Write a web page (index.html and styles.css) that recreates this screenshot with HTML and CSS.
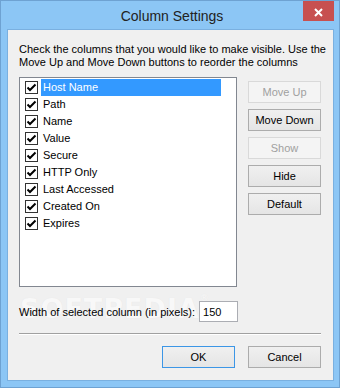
FILE: index.html
```
<!DOCTYPE html>
<html lang="en">
<head>
  <meta charset="UTF-8" />
  <title>Column Settings</title>
  <link rel="stylesheet" href="styles.css">
</head>
<body>

  <div class="window">
    <div class="titlebar">
      <span class="title">Column Settings</span>
      <span class="close">
        <svg width="9" height="9" viewBox="0 0 9 9"><path d="M1 1 L8 8 M8 1 L1 8" stroke="#fff" stroke-width="2" fill="none"/></svg>
      </span>
    </div>

    <div class="client">
      <div class="watermark">SOFTPEDIA<sup>®</sup></div>

      <p class="intro">Check the columns that you would like to make visible. Use the<br>Move Up and Move Down buttons to reorder the columns</p>

      <div class="main">
        <ul class="column-list">
          <li class="selected"><span class="check"><svg width="11" height="11" viewBox="0 0 11 11"><path d="M1.5 5.5 L4 8 L9.5 2.5" stroke="#000" stroke-width="2" fill="none"/></svg></span><span class="label">Host Name</span></li>
          <li><span class="check"><svg width="11" height="11" viewBox="0 0 11 11"><path d="M1.5 5.5 L4 8 L9.5 2.5" stroke="#000" stroke-width="2" fill="none"/></svg></span><span class="label">Path</span></li>
          <li><span class="check"><svg width="11" height="11" viewBox="0 0 11 11"><path d="M1.5 5.5 L4 8 L9.5 2.5" stroke="#000" stroke-width="2" fill="none"/></svg></span><span class="label">Name</span></li>
          <li><span class="check"><svg width="11" height="11" viewBox="0 0 11 11"><path d="M1.5 5.5 L4 8 L9.5 2.5" stroke="#000" stroke-width="2" fill="none"/></svg></span><span class="label">Value</span></li>
          <li><span class="check"><svg width="11" height="11" viewBox="0 0 11 11"><path d="M1.5 5.5 L4 8 L9.5 2.5" stroke="#000" stroke-width="2" fill="none"/></svg></span><span class="label">Secure</span></li>
          <li><span class="check"><svg width="11" height="11" viewBox="0 0 11 11"><path d="M1.5 5.5 L4 8 L9.5 2.5" stroke="#000" stroke-width="2" fill="none"/></svg></span><span class="label">HTTP Only</span></li>
          <li><span class="check"><svg width="11" height="11" viewBox="0 0 11 11"><path d="M1.5 5.5 L4 8 L9.5 2.5" stroke="#000" stroke-width="2" fill="none"/></svg></span><span class="label">Last Accessed</span></li>
          <li><span class="check"><svg width="11" height="11" viewBox="0 0 11 11"><path d="M1.5 5.5 L4 8 L9.5 2.5" stroke="#000" stroke-width="2" fill="none"/></svg></span><span class="label">Created On</span></li>
          <li><span class="check"><svg width="11" height="11" viewBox="0 0 11 11"><path d="M1.5 5.5 L4 8 L9.5 2.5" stroke="#000" stroke-width="2" fill="none"/></svg></span><span class="label">Expires</span></li>
        </ul>

        <div class="side-buttons">
          <button disabled>Move Up</button>
          <button>Move Down</button>
          <button disabled>Show</button>
          <button>Hide</button>
          <button>Default</button>
        </div>
      </div>

      <div class="width-row">
        <label for="colWidth">Width of selected column (in pixels):</label>
        <input type="text" id="colWidth" value="150" />
      </div>

      <div class="separator"></div>

      <div class="footer">
        <button class="default">OK</button>
        <button>Cancel</button>
      </div>
    </div>
  </div>

</body>
</html>
```

FILE: styles.css
```
* { margin: 0; padding: 0; box-sizing: border-box; }

body {
  font-family: 'Liberation Sans', Arial, sans-serif;
  font-size: 11px;
  color: #000;
  background: #8cc6f5;
  width: 340px;
  height: 388px;
  overflow: hidden;
}

.window {
  width: 340px;
  height: 388px;
  background: #8cc6f5;
  border: 1px solid #6ea2d2;
  padding: 0 5px 6px 6px;
  display: flex;
  flex-direction: column;
}

.titlebar {
  height: 28px;
  display: flex;
  align-items: center;
  justify-content: center;
  position: relative;
}

.title {
  font-size: 14px;
  color: #222;
  padding-top: 1px;
  margin-left: 3px;
}

.close {
  position: absolute;
  top: 0;
  right: 0;
  width: 31px;
  height: 20px;
  background: #c75050;
  display: flex;
  align-items: center;
  justify-content: center;
  padding-top: 2px;
}

.client {
  flex: 1;
  background: #f0f0f0;
  border: 1px solid #7ab0e0;
  padding: 13px 12px 0 11px;
  position: relative;
  display: flex;
  flex-direction: column;
}

/* keep real content above the watermark */
.intro, .main, .width-row, .separator, .footer {
  position: relative;
  z-index: 1;
}

.intro {
  line-height: 13px;
  white-space: nowrap;
}

.main {
  display: flex;
  gap: 11px;
  margin-top: 8px;
}

.column-list {
  list-style: none;
  width: 218px;
  height: 210px;
  background: #fff;
  border: 1px solid #828790;
  padding: 1px 0 0 5px;
}

.column-list li {
  height: 17px;
  display: flex;
  align-items: center;
}

.check {
  width: 13px;
  height: 13px;
  border: 1px solid #333;
  background: #fff;
  display: flex;
  align-items: center;
  justify-content: center;
}

.label {
  margin-left: 3px;
  padding-left: 2px;
  height: 17px;
  line-height: 17px;
  flex: 0 0 auto;
}

.column-list li.selected .label {
  width: 180px;
  background: #3399ff;
  color: #fff;
}

.side-buttons {
  display: flex;
  flex-direction: column;
  gap: 6px;
  padding-top: 4px;
}

button {
  font-family: 'Liberation Sans', Arial, sans-serif;
  font-size: 11px;
  color: #000;
  width: 73px;
  height: 22px;
  border: 1px solid #acacac;
  background: linear-gradient(#f0f0f0, #e5e5e5);
}

button:disabled {
  color: #a0a0a0;
  border-color: #d9d9d9;
  background: #f4f4f4;
}

.width-row {
  display: flex;
  align-items: center;
  gap: 4px;
  margin-top: 14px;
}

.width-row input {
  width: 39px;
  height: 21px;
  border: 1px solid #abadb3;
  background: #fff;
  font-family: 'Liberation Sans', Arial, sans-serif;
  font-size: 11px;
  padding: 0 3px;
  outline: none;
}

.separator {
  margin-top: 11px;
  height: 2px;
  border-top: 1px solid #a0a0a0;
  border-bottom: 1px solid #fff;
}

.footer {
  display: flex;
  justify-content: flex-end;
  gap: 13px;
  margin-top: 11px;
}

.footer button.default {
  border-color: #3c96e6;
}

.watermark {
  position: absolute;
  z-index: 0;
  left: 12px;
  top: 263px;
  font-family: 'DejaVu Sans', sans-serif;
  font-weight: bold;
  font-size: 27px;
  letter-spacing: 1px;
  color: #f8f8f8;
  text-shadow: 0 0 1px #e4e4e4;
  pointer-events: none;
}

.watermark sup {
  font-size: 9px;
  font-weight: normal;
  vertical-align: top;
}
```
